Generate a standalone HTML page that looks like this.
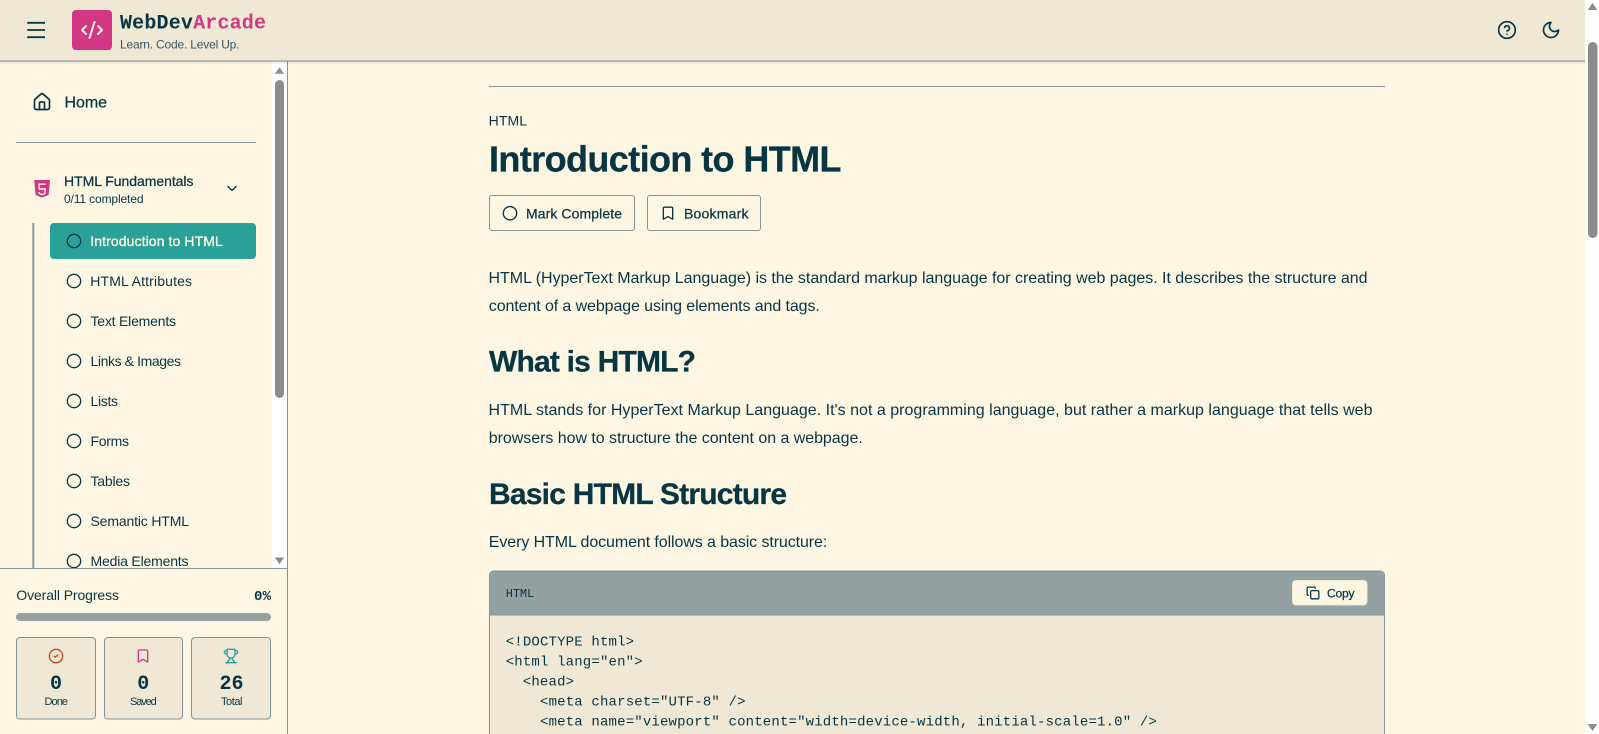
<!DOCTYPE html>
<html lang="en">
<head>
<meta charset="utf-8">
<title>Introduction to HTML - WebDevArcade</title>
<style>
html,body{margin:0;padding:0;width:1599px;height:734px;overflow:hidden;background:#fdf6e3}
svg{display:block;position:absolute;left:0;top:0}
text{font-family:"Liberation Sans",sans-serif;fill:#073642;white-space:pre}
.m{font-family:"Liberation Mono",monospace}
.b{font-weight:700}
.md{stroke:#073642;stroke-width:.25}
.t14{font-size:14px}.t16{font-size:16px}.t12{font-size:12px}
.ic{fill:none;stroke:#073642;stroke-linecap:round;stroke-linejoin:round}
.code{font-family:"Liberation Mono",monospace;font-size:14px;letter-spacing:.168px}
</style>
</head>
<body>
<svg width="1599" height="734" viewBox="0 0 1599 734" xmlns="http://www.w3.org/2000/svg">
<defs><clipPath id="nav"><rect x="0" y="61" width="288" height="507"/></clipPath></defs>
<rect width="1599" height="734" fill="#fdf6e3"/>

<!-- main -->
<g>
<rect x="489" y="86" width="896" height="1" fill="#839496"/>
<text class="t14" x="488.6" y="125.5" textLength="38.5">HTML</text>
<text class="b" font-size="36" x="489" y="171.5" textLength="352.5" style="stroke:#073642;stroke-width:.3">Introduction to HTML</text>

<rect x="489.5" y="195.5" width="145" height="35" rx="2.5" fill="none" stroke="#839496"/>
<g class="ic" stroke-width="1.33"><circle cx="510" cy="213.2" r="6.67"/></g>
<text class="t14 md" x="526" y="218.3" textLength="96">Mark Complete</text>
<rect x="647.5" y="195.5" width="113" height="35" rx="2.5" fill="none" stroke="#839496"/>
<g class="ic" transform="translate(660 205.2) scale(.667)" stroke-width="2"><path d="m19 21-7-4-7 4V5a2 2 0 0 1 2-2h10a2 2 0 0 1 2 2v16z"/></g>
<text class="t14 md" x="684" y="218.3" textLength="64.5">Bookmark</text>

<text class="t16" x="488.5" y="283" textLength="879">HTML (HyperText Markup Language) is the standard markup language for creating web pages. It describes the structure and</text>
<text class="t16" x="488.8" y="311" textLength="331">content of a webpage using elements and tags.</text>
<text class="b" font-size="30" x="489" y="371.5" textLength="207" style="stroke:#073642;stroke-width:.3">What is HTML?</text>
<text class="t16" x="488.5" y="415" textLength="884">HTML stands for HyperText Markup Language. It's not a programming language, but rather a markup language that tells web</text>
<text class="t16" x="488.8" y="443" textLength="374">browsers how to structure the content on a webpage.</text>
<text class="b" font-size="30" x="489" y="504" textLength="298" style="stroke:#073642;stroke-width:.3">Basic HTML Structure</text>
<text class="t16" x="488.8" y="547" textLength="338.5">Every HTML document follows a basic structure:</text>

<path d="M489.5 740V575a4 4 0 0 1 4-4h887a4 4 0 0 1 4 4V740z" fill="#eee8d5" stroke="#839496"/>
<path d="M490 615V575.5a4 4 0 0 1 4-4h886a4 4 0 0 1 4 4V615z" fill="#93a1a1"/>
<rect x="490" y="614.5" width="894" height="1" fill="#839496"/>
<text class="m t12" x="505.8" y="597" textLength="28.4">HTML</text>
<rect x="1292.5" y="580.5" width="74.5" height="24.5" rx="3.5" fill="#fdf6e3" stroke="#eee8d5"/>
<g class="ic" transform="translate(1306 586) scale(.583)" stroke-width="2.2"><rect x="8" y="8" width="14" height="14" rx="2"/><path d="M4 16c-1.1 0-2-.9-2-2V4c0-1.1.9-2 2-2h10c1.1 0 2 .9 2 2"/></g>
<text class="t12 md" x="1327" y="597.3" textLength="27.5">Copy</text>

<text class="code" x="505.7" y="645.7">&lt;!DOCTYPE html&gt;</text>
<text class="code" x="505.7" y="665.7">&lt;html lang="en"&gt;</text>
<text class="code" x="522.8" y="685.7">&lt;head&gt;</text>
<text class="code" x="540" y="705.7">&lt;meta charset="UTF-8" /&gt;</text>
<text class="code" x="540" y="725.7">&lt;meta name="viewport" content="width=device-width, initial-scale=1.0" /&gt;</text>
</g>

<!-- page scrollbar -->
<rect x="1585" y="0" width="14" height="734" fill="#fff"/>
<rect x="1588" y="42" width="9.5" height="196" rx="4.7" fill="#8c8c8c"/>
<path d="M1592.5 3l4.8 7h-9.6z" fill="#8c8c8c"/>
<path d="M1587.7 724h9.6l-4.8 7z" fill="#8c8c8c"/>

<!-- sidebar -->
<g>
<rect x="0" y="61" width="287" height="673" fill="#fdf6e3"/>
<rect x="287" y="61" width="1" height="673" fill="#839496"/>
<g clip-path="url(#nav)">
<g class="ic" transform="translate(32 92) scale(.833)" stroke-width="2"><path d="M15 21v-8a1 1 0 0 0-1-1h-4a1 1 0 0 0-1 1v8"/><path d="M3 10a2 2 0 0 1 .709-1.528l7-5.999a2 2 0 0 1 2.582 0l7 5.999A2 2 0 0 1 21 10v9a2 2 0 0 1-2 2H5a2 2 0 0 1-2-2z"/></g>
<text class="t16 md" x="64.5" y="107.3" textLength="42.5">Home</text>
<rect x="16" y="142" width="240" height="1" fill="#839496"/>

<path d="M34.2 180H50l-1.4 15-6.6 2.5-6.4-2.5z" fill="#d33682"/>
<path d="M45.6 184.2H38.9l.4 4.8h6l-.5 4.5-2.8 1-2.8-1-.2-1.6" fill="none" stroke="#fdf6e3" stroke-width="1.4"/>
<text class="t14 md" x="64" y="186" textLength="129.5">HTML Fundamentals</text>
<text class="t12" x="64" y="203" textLength="79.5">0/11 completed</text>
<path d="M228 186.5l4 4 4-4" class="ic" stroke-width="1.33"/>

<rect x="32.3" y="223" width="2" height="345" fill="#8a9a9c"/>
<rect x="50" y="223" width="206" height="36" rx="4" fill="#2aa198"/>
<g class="ic" stroke-width="1.33">
<circle cx="74" cy="241" r="6.67"/><circle cx="74" cy="281" r="6.67"/><circle cx="74" cy="321" r="6.67"/><circle cx="74" cy="361" r="6.67"/><circle cx="74" cy="401" r="6.67"/><circle cx="74" cy="441" r="6.67"/><circle cx="74" cy="481" r="6.67"/><circle cx="74" cy="521" r="6.67"/><circle cx="74" cy="561" r="6.67"/>
</g>
<text class="t14" x="90.3" y="246" textLength="132.5" style="fill:#fdf6e3;stroke:#fdf6e3;stroke-width:.35">Introduction to HTML</text>
<text class="t14" x="90.3" y="286" textLength="101.7">HTML Attributes</text>
<text class="t14" x="90.5" y="326" textLength="85.5">Text Elements</text>
<text class="t14" x="90.5" y="366" textLength="90.5">Links &amp; Images</text>
<text class="t14" x="90.5" y="406" textLength="27.5">Lists</text>
<text class="t14" x="90.5" y="446" textLength="38.5">Forms</text>
<text class="t14" x="90.5" y="486" textLength="39.5">Tables</text>
<text class="t14" x="90.5" y="526" textLength="98.5">Semantic HTML</text>
<text class="t14" x="90.5" y="566" textLength="98">Media Elements</text>

<rect x="272" y="61" width="15" height="507" fill="#fff"/>
<rect x="275" y="80" width="9" height="318" rx="4.5" fill="#8c8c8c"/>
<path d="M279.5 67.2l4.6 6.5h-9.2z" fill="#8c8c8c"/>
<path d="M274.9 557.5h9.2l-4.6 6.8z" fill="#8c8c8c"/>
</g>
<rect x="0" y="568" width="287" height="1" fill="#839496"/>

<text class="t14" x="16.3" y="600" textLength="102.7">Overall Progress</text>
<text class="m b t14" x="254" y="600" textLength="17">0%</text>
<rect x="16" y="613" width="255" height="8" rx="4" fill="#93a1a1"/>

<rect x="16.5" y="637.5" width="79" height="81.5" rx="3.5" fill="#eee8d5" stroke="#839496"/>
<rect x="104.5" y="637.5" width="78" height="81.5" rx="3.5" fill="#eee8d5" stroke="#839496"/>
<rect x="191.5" y="637.5" width="79" height="81.5" rx="3.5" fill="#eee8d5" stroke="#839496"/>

<g class="ic" style="stroke:#cb4b16" transform="translate(48 648) scale(.667)" stroke-width="2"><circle cx="12" cy="12" r="10"/><path d="m9 12 2 2 4-4"/></g>
<g class="ic" style="stroke:#d33682" transform="translate(135 648) scale(.667)" stroke-width="2"><path d="m19 21-7-4-7 4V5a2 2 0 0 1 2-2h10a2 2 0 0 1 2 2v16z"/></g>
<g class="ic" style="stroke:#2aa198" transform="translate(223 648) scale(.667)" stroke-width="2"><path d="M6 9H4.5a2.5 2.5 0 0 1 0-5H6"/><path d="M18 9h1.5a2.5 2.5 0 0 0 0-5H18"/><path d="M4 22h16"/><path d="M10 14.66V17c0 .55-.47.98-.97 1.21C7.85 18.75 7 20.24 7 22"/><path d="M14 14.66V17c0 .55.47.98.97 1.21C16.15 18.75 17 20.24 17 22"/><path d="M18 2H6v7a6 6 0 0 0 12 0V2Z"/></g>

<text class="m b" font-size="20" x="50" y="689">0</text>
<text class="m b" font-size="20" x="137.3" y="689">0</text>
<text class="m b" font-size="20" x="219.5" y="689">26</text>
<text font-size="11" x="44.5" y="705" textLength="23.5">Done</text>
<text font-size="11" x="130" y="705" textLength="26.7">Saved</text>
<text font-size="11" x="221" y="705" textLength="21.5">Total</text>
</g>

<!-- header -->
<rect x="0" y="61" width="1585" height="1" fill="#000" opacity=".14"/>
<rect x="0" y="62" width="1585" height="1" fill="#000" opacity=".07"/>
<rect x="0" y="63" width="1585" height="1" fill="#000" opacity=".03"/>
<rect x="0" y="0" width="1585" height="61" fill="#eee8d5"/>
<rect x="0" y="60.5" width="1585" height="1" fill="#839496"/>
<g stroke="#073642" stroke-width="1.8" stroke-linecap="butt">
<path d="M27.2 22.8H45M27.2 30H45M27.2 37.2H45"/>
</g>
<rect x="72" y="10" width="40" height="40" rx="4" fill="#d33682"/>
<g fill="none" stroke="#fdf6e3" stroke-width="2" stroke-linecap="round" stroke-linejoin="round" transform="translate(80 18)"><path d="m18 16 4-4-4-4"/><path d="m6 8-4 4 4 4"/><path d="m14.5 4-5 16"/></g>
<text class="m b" font-size="20" x="120" y="28.7" textLength="146"><tspan>WebDev</tspan><tspan style="fill:#d33682">Arcade</tspan></text>
<text class="t12" x="120" y="48.3" textLength="119.5" style="fill:#375a63">Learn. Code. Level Up.</text>
<g class="ic" transform="translate(1497 20) scale(.833)" stroke-width="2"><circle cx="12" cy="12" r="10"/><path d="M9.09 9a3 3 0 0 1 5.83 1c0 2-3 3-3 3"/><path d="M12 17h.01"/></g>
<g class="ic" transform="translate(1541 20) scale(.833)" stroke-width="2"><path d="M12 3a6 6 0 0 0 9 9 9 9 0 1 1-9-9Z"/></g>
</svg>
</body>
</html>
